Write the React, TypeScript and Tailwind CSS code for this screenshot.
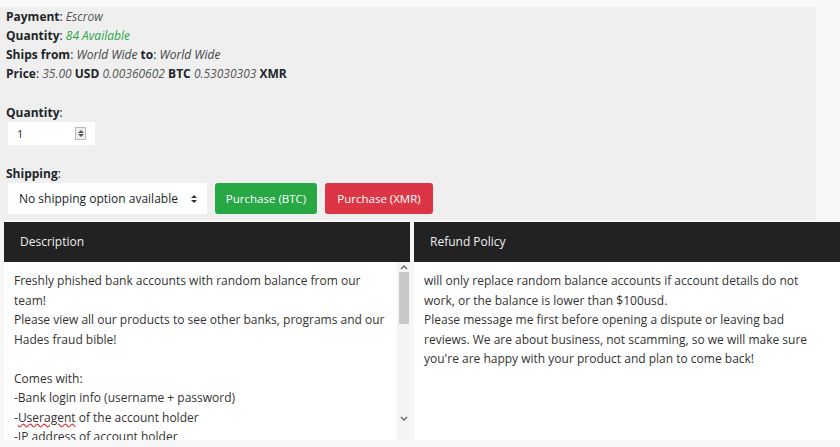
import React from "react";

function Chevron({ up }: { up?: boolean }) {
  return (
    <svg width="8" height="6" viewBox="0 0 8 6" className="block">
      <path d={up ? "M1 5 L4 2 L7 5" : "M1 1 L4 4 L7 1"} fill="none" stroke="#666" strokeWidth="1.4" />
    </svg>
  );
}

export default function App() {
  const font = { fontFamily: '"Open Sans", "Noto Sans", sans-serif' };
  return (
    <div className="w-[840px] h-[447px] overflow-hidden bg-[#f7f7f7] text-[#212529]" style={font}>
      <div className="h-[7px] bg-[#f8f8f8]" />
      <div className="w-[816px] h-[213px] bg-[#efefef] pl-[6px] text-[12px] leading-[19px]">
        <div><b>Payment</b>: <i className="text-[#555]">Escrow</i></div>
        <div><b>Quantity</b>: <i className="text-[#28a745]">84 Available</i></div>
        <div><b>Ships from</b>: <i className="text-[#444]">World Wide</i> <b>to</b>: <i className="text-[#444]">World Wide</i></div>
        <div><b>Price</b>: <i className="text-[#555]">35.00</i> <b>USD</b> <i className="text-[#555]">0.00360602</i> <b>BTC</b> <i className="text-[#555]">0.53030303</i> <b>XMR</b></div>
        <div className="h-[19.5px]" />
        <div><b>Quantity</b>:</div>
        <div className="ml-[2px] w-[87px] h-[23px] bg-white flex items-center justify-between pl-[9px] pr-[9px] text-[11px]">
          <span>1</span>
          <span className="w-[11px] h-[13px] border border-[#bbb] bg-[#eee] flex flex-col items-center justify-center gap-[1px]">
            <svg width="6" height="3" viewBox="0 0 6 3" className="block"><path d="M0 3 L3 0 L6 3 Z" fill="#555" /></svg>
            <svg width="6" height="3" viewBox="0 0 6 3" className="block"><path d="M0 0 L3 3 L6 0 Z" fill="#555" /></svg>
          </span>
        </div>
        <div className="h-[19.5px]" />
        <div><b>Shipping</b>:</div>
        <div className="flex items-center gap-[8px] ml-[2px]">
          <div className="w-[199px] h-[31px] bg-white flex items-center justify-between pl-[11px] pr-[10px] text-[12px]">
            <span>No shipping option available</span>
            <svg width="6" height="10" viewBox="0 0 6 10" className="block"><path d="M0 4 L3 1 L6 4 Z M0 6 L3 9 L6 6 Z" fill="#333" /></svg>
          </div>
          <div className="w-[102px] h-[31px] bg-[#28a745] text-white text-[11.5px] rounded-[3px] flex items-center justify-center">Purchase (BTC)</div>
          <div className="w-[108px] h-[31px] bg-[#dc3545] text-white text-[11.5px] rounded-[3px] flex items-center justify-center">Purchase (XMR)</div>
        </div>
      </div>
      <div className="flex gap-[4px] pl-[4px] pt-[2px]">
        <div className="w-[406px] flex flex-col">
          <div className="h-[40px] bg-[#222] text-[#eee] text-[12px] flex items-center pl-[16px]">Description</div>
          <div className="h-[178px] bg-white flex">
            <div className="flex-1 pl-[10px] pr-[6px] pt-[9px] text-[12px] leading-[19.5px] text-[#333] overflow-hidden">
              <div>Freshly phished bank accounts with random balance from our team!</div>
              <div>Please view all our products to see other banks, programs and our Hades fraud bible!</div>
              <div>&nbsp;</div>
              <div>Comes with:</div>
              <div>-Bank login info (username + password)</div>
              <div>-<span className="underline decoration-wavy decoration-[#d33]">Useragent</span> of the account holder</div>
              <div>-IP address of account holder</div>
            </div>
            <div className="w-[13px] bg-[#f4f4f4] flex flex-col items-center">
              <div className="h-[10px] flex items-center"><Chevron up /></div>
              <div className="w-[10px] h-[52px] bg-[#c8c8c8]" />
              <div className="flex-1" />
              <div className="h-[10px] flex items-center mb-[16px]"><Chevron /></div>
            </div>
          </div>
        </div>
        <div className="flex-1 flex flex-col">
          <div className="h-[40px] bg-[#222] text-[#eee] text-[12px] flex items-center pl-[16px]">Refund Policy</div>
          <div className="h-[178px] bg-white pl-[10px] pr-[14px] pt-[9px] text-[12px] leading-[19.5px] text-[#333]">
            <div>will only replace random balance accounts if account details do not work, or the balance is lower than $100usd.</div>
            <div>Please message me first before opening a dispute or leaving bad reviews. We are about business, not scamming, so we will make sure you're are happy with your product and plan to come back!</div>
          </div>
        </div>
      </div>
    </div>
  );
}
